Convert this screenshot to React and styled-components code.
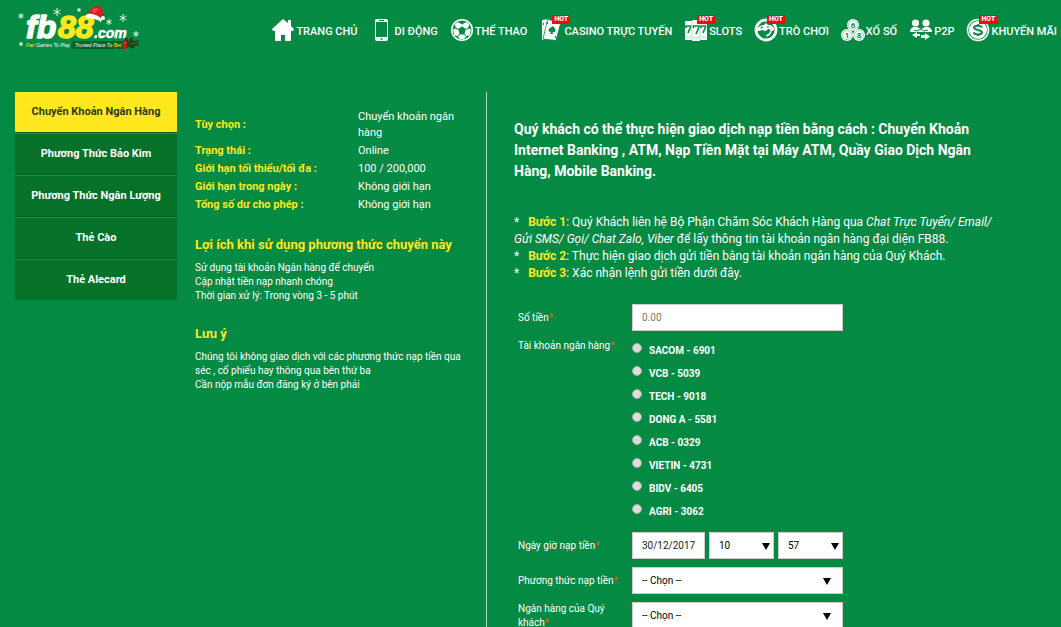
import React from "react"
import styled, { createGlobalStyle } from "styled-components"

const SnowFlake = ({ x, y, r }) => (
  <g stroke="#e6f5e9" strokeWidth="1" transform={`translate(${x} ${y})`}>
    <path d={`M0 ${-r}V${r}M${-r * 0.87} ${-r / 2}L${r * 0.87} ${r / 2}M${r * 0.87} ${-r / 2}L${-r * 0.87} ${r / 2}`} />
  </g>
)

const Logo = () => (
  <svg width="126" height="48" viewBox="0 0 126 48" role="img" aria-label="fb88.com">
    <rect x="55" y="35" width="56" height="8" rx="4" fill="#04602c" />
    <g fontFamily='"Liberation Sans", sans-serif' fontStyle="italic" fontWeight="700" strokeLinejoin="round">
      <text x="10" y="32" fontSize="32" fill="#fff" stroke="#fff" strokeWidth="1.5">fb</text>
      <text x="42" y="32" fontSize="32" fill="#ffe81d" stroke="#ffe81d" strokeWidth="1.5">88</text>
      <text x="78" y="32" fontSize="14" fill="#fff" stroke="#fff" strokeWidth=".5">.com</text>
    </g>
    <g fontFamily='"Liberation Sans", sans-serif' fontStyle="italic" fontSize="5">
      <text x="10" y="41" fill="#ffe81d">Fair<tspan fill="#fff"> Games To Play</tspan></text>
      <text x="59" y="41" fill="#fff">Trusted Place To <tspan fill="#ffe81d">Bet</tspan></text>
    </g>
    <path d="M71 9c2-5 6-9 12-9 3 1 4 4 4 8v5l-5-3z" fill="#d81e22" />
    <path d="M76 4c2-2 5-2 7-1-2 1-4 3-5 5z" fill="#f0484a" />
    <path d="M70 9c3-3 12 0 16 4l-1 3c-4-3-10-4-15-4z" fill="#fff" />
    <circle cx="87" cy="12" r="2" fill="#fff" />
    <SnowFlake x={5} y={10} r={3} />
    <SnowFlake x={41} y={6} r={4} />
    <SnowFlake x={63} y={4} r={2} />
    <SnowFlake x={93} y={16} r={3} />
    <SnowFlake x={107} y={12} r={4} />
    <SnowFlake x={120} y={28} r={3} />
    <SnowFlake x={5} y={38} r={2} />
    <path d="M108 36l1-5 4 3 3-3 1 4 7-1-3 3 3 2-5 1-2 3-4-2-4 2z" fill="#1d4317" />
    <path d="M113 38l8-1M112 36l1-3" stroke="#5f5a1c" strokeWidth="1" />
    <circle cx="109" cy="37" r="2.200" fill="#e3202a" />
    <circle cx="109" cy="41" r="2.200" fill="#c9141e" />
  </svg>
)

const HomeIcon = () => (
  <path fill="#fff" d="M12 1L1 11l1 2h2v10h6v-6h4v6h6V13h2l1-2-3-3V2h-3v3z" />
)

const PhoneIcon = () => (
  <>
    <rect x="5" y="1" width="13" height="22" rx="2" fill="#fff" />
    <rect x="6" y="4" width="11" height="15" fill="#048a43" />
    <path d="M9 2.500h5" stroke="#048a43" />
    <circle cx="11.500" cy="21" r="1" fill="#048a43" />
  </>
)

const BallIcon = () => (
  <>
    <circle cx="12" cy="12" r="10.300" fill="#048a43" stroke="#fff" strokeWidth="1.600" />
    <path fill="#fff" d="M12 6.500l4-2.500 3 2-.5 3.500L15.500 11 12 8.500 8.500 11 5.500 9.500 5 6l3-2zM3 11.500l2.500-1L8.500 12l1 3.500-2 2.500-3-.5zM21 11.500l-2.500-1-3 1.500-1 3.500 2 2.500 3-.5zM9.500 16.500h5l1.500 2.500-2 2h-4l-2-2z" />
    <path fill="#048a43" d="M12 8.500l3.500 2.700-1.300 4.300H9.800l-1.300-4.300z" />
  </>
)

const CardsIcon = () => (
  <>
    <path fill="#fff" d="M3 2l7-1-4 20-3 1z" />
    <path fill="#fff" stroke="#048a43" strokeWidth=".8" d="M8.500 1.500L22 4l-5 18.500L4 21z" />
    <path fill="#048a43" d="M13.500 8c2 2 3.500 3 3 5-.5 1.500-2 1.500-3 .8l.5 2.200h-3l1.200-2.500c-1.500.7-3 0-2.700-1.500.4-2 2.500-2 4-4zM8 4h1v2H8zM16 18h1v2h-1zM4 5h1v2H4z" />
  </>
)

const SevensIcon = () => (
  <>
    <path fill="#fff" d="M1 3h7v19H1zM16 3h7v19h-7zM8 2h8v21H8z" />
    <path fill="none" stroke="#048a43" strokeWidth="1.600" d="M2 10V8h4.500v1L4 15M9.500 10V8H15v1l-3 7M17 10V8h4.500v1L19 15" />
    <path stroke="#7cc49b" strokeWidth=".6" d="M8 4v18M16 4v18M2 19h5M9 20h6M17 19h5" />
  </>
)

const GameIcon = () => (
  <>
    <circle cx="12" cy="12" r="10" fill="none" stroke="#fff" strokeWidth="2.800" />
    <path fill="#fff" d="M3 11c2-3 4-4 7-4l2-2 2 2c4 0 6 2 6 5l-2 1-3-2c-2 0-2 2-4 2l-3-1-3 1H3z" />
    <path fill="#048a43" d="M6 9.500l3-1-1 2zM13 8.500h2v1h-2z" />
    <path fill="none" stroke="#fff" strokeWidth="1.600" d="M17 12c0 3-2 5-5 6" />
  </>
)

const LotteryIcon = () => (
  <>
    <circle cx="12" cy="7" r="6" fill="#fff" />
    <circle cx="6" cy="17" r="6" fill="#fff" />
    <circle cx="18" cy="17" r="6" fill="#fff" />
    <g fill="none" stroke="#5fb685" strokeWidth=".6">
      <circle cx="12" cy="7" r="4.500" />
      <circle cx="6" cy="17" r="4.500" />
      <circle cx="18" cy="17" r="4.500" />
    </g>
    <g fontFamily="Roboto, sans-serif" fontSize="8" fontWeight="700" fill="#048a43" textAnchor="middle">
      <text x="12" y="10">6</text>
      <text x="6" y="20">1</text>
      <text x="18" y="20">8</text>
    </g>
  </>
)

const PeopleIcon = () => (
  <>
    <circle cx="6.500" cy="5" r="3.600" fill="#fff" />
    <circle cx="17" cy="5" r="3.600" fill="#fff" />
    <path fill="#fff" d="M1 14c0-3 2-5 5-5h2l4 2 4-2h2c3 0 5 2 5 5z" />
    <path stroke="#048a43" strokeWidth="1" fill="none" d="M5 12l3 1 4-2 3 2 4-1" />
    <path fill="#fff" d="M8 14v2h3v2H8v2l-5-3zM16 15v2h-4v3h4v2l5-3.500z" />
  </>
)

const CoinIcon = () => (
  <>
    <circle cx="12" cy="12" r="10.500" fill="none" stroke="#fff" strokeWidth="1.500" />
    <circle cx="12" cy="12" r="9" fill="#fff" />
    <path d="M16 9.500c-1-2.500-7.500-2.500-8 0-.2 3 8 2 8 5-.5 2.500-7 2.500-8.500 0M12 6v2M12 16v2" fill="none" stroke="#048a43" strokeWidth="2" />
  </>
)

const navItems = [
  { label: "TRANG CHỦ", icon: HomeIcon },
  { label: "DI ĐỘNG", icon: PhoneIcon },
  { label: "THỂ THAO", icon: BallIcon },
  { label: "CASINO TRỰC TUYẾN", icon: CardsIcon, hot: true },
  { label: "SLOTS", icon: SevensIcon, hot: true },
  { label: "TRÒ CHƠI", icon: GameIcon, hot: true },
  { label: "XỔ SỐ", icon: LotteryIcon },
  { label: "P2P", icon: PeopleIcon },
  { label: "KHUYẾN MÃI", icon: CoinIcon, hot: true },
]

const methods = [
  "Chuyển Khoản Ngân Hàng",
  "Phương Thức Bảo Kim",
  "Phương Thức Ngân Lượng",
  "Thẻ Cào",
  "Thẻ Alecard",
]

const limits = [
  ["Tùy chọn :", "Chuyển khoản ngân hàng"],
  ["Trạng thái :", "Online"],
  ["Giới hạn tối thiểu/tối đa :", "100 / 200,000"],
  ["Giới hạn trong ngày :", "Không giới hạn"],
  ["Tổng số dư cho phép :", "Không giới hạn"],
]

const accounts = [
  "SACOM - 6901",
  "VCB - 5039",
  "TECH - 9018",
  "DONG A - 5581",
  "ACB - 0329",
  "VIETIN - 4731",
  "BIDV - 6405",
  "AGRI - 3062",
]

const App = () => {
  return (
    <>
      <GlobalStyles />
      <Header>
        <Logo />
        <Nav>
          {navItems.map(({ label, icon: Icon, hot }) => (
            <NavLink href="#" key={label}>
              <IconBox>
                <svg width="24" height="24" viewBox="0 0 24 24" aria-hidden="true"><Icon /></svg>
                {hot && <Hot>HOT</Hot>}
              </IconBox>
              {label}
            </NavLink>
          ))}
        </Nav>
      </Header>
      <Main>
        <SideMenu>
          {methods.map((method, index) => (
            <SideLink href="#" key={method} $active={index === 0}>{method}</SideLink>
          ))}
        </SideMenu>
        <Info>
          <Limits>
            <tbody>
              {limits.map(([name, value]) => (
                <tr key={name}>
                  <th scope="row">{name}</th>
                  <td>{value}</td>
                </tr>
              ))}
            </tbody>
          </Limits>
          <Note>
            <NoteTitle>Lợi ích khi sử dụng phương thức chuyển này</NoteTitle>
            <NoteText>Sử dụng tài khoản Ngân hàng để chuyển</NoteText>
            <NoteText>Cập nhật tiền nạp nhanh chóng</NoteText>
            <NoteText>Thời gian xử lý: Trong vòng 3 - 5 phút</NoteText>
          </Note>
          <Note>
            <NoteTitle>Lưu ý</NoteTitle>
            <NoteText>Chúng tôi không giao dịch với các phương thức nạp tiền qua séc , cổ phiếu hay thông qua bên thứ ba</NoteText>
            <NoteText>Cần nộp mẫu đơn đăng ký ở bên phải</NoteText>
          </Note>
        </Info>
        <Deposit>
          <Intro>
            Quý khách có thể thực hiện giao dịch nạp tiền bằng cách : Chuyển Khoản Internet Banking , ATM, Nạp Tiền Mặt tại Máy ATM, Quầy Giao Dịch Ngân Hàng, Mobile Banking.
          </Intro>
          <Step>
            <Star>*</Star><b>Bước 1</b>: Quý Khách liên hệ Bộ Phận Chăm Sóc Khách Hàng qua <i>Chat Trực Tuyến/ Email/ Gửi SMS/ Gọi/ Chat Zalo, Viber</i> để lấy thông tin tài khoản ngân hàng đại diện FB88.
          </Step>
          <Step>
            <Star>*</Star><b>Bước 2</b>: Thực hiện giao dịch gửi tiền bằng tài khoản ngân hàng của Quý Khách.
          </Step>
          <Step>
            <Star>*</Star><b>Bước 3</b>: Xác nhận lệnh gửi tiền dưới đây.
          </Step>
          <Form>
            <Label htmlFor="amount">Số tiền<em>*</em></Label>
            <TextInput id="amount" placeholder="0.00" />

            <Label as="span" id="account-label" $top>Tài khoản ngân hàng<em>*</em></Label>
            <Accounts role="radiogroup" aria-labelledby="account-label">
              {accounts.map((account) => (
                <Account key={account}>
                  <Radio type="radio" name="account" value={account} />
                  {account}
                </Account>
              ))}
            </Accounts>

            <Label htmlFor="date">Ngày giờ nạp tiền<em>*</em></Label>
            <DateRow>
              <TextInput id="date" defaultValue="30/12/2017" />
              <SelectBox>
                <Select aria-label="Giờ" defaultValue="10"><option>10</option></Select>
                <Arrow />
              </SelectBox>
              <SelectBox>
                <Select aria-label="Phút" defaultValue="57"><option>57</option></Select>
                <Arrow />
              </SelectBox>
            </DateRow>

            <Label htmlFor="method">Phương thức nạp tiền<em>*</em></Label>
            <SelectBox $wide>
              <Select id="method"><option>-- Chọn --</option></Select>
              <Arrow />
            </SelectBox>

            <Label htmlFor="bank">Ngân hàng của Quý khách<em>*</em></Label>
            <SelectBox $wide>
              <Select id="bank"><option>-- Chọn --</option></Select>
              <Arrow />
            </SelectBox>
          </Form>
        </Deposit>
      </Main>
    </>
  )
}

const Arrow = () => (
  <svg width="8" height="7" viewBox="0 0 8 7" aria-hidden="true"><path d="M0 0h8L4 7z" fill="#000" /></svg>
)

const GlobalStyles = createGlobalStyle`
  * {
    box-sizing: border-box;
  }

  body {
    margin: 0;
    background: #048a43;
    color: #fff;
    font-family: Roboto, sans-serif;
    font-size: 11px;
  }

  a {
    color: inherit;
    text-decoration: none;
  }
`

const Header = styled.header`
  display: flex;
  justify-content: space-between;
  height: 56px;
  padding: 6px 4px 0 16px;
  border-bottom: 2px solid #058641;
`

const Nav = styled.nav`
  display: flex;
  gap: 12px;
  align-self: flex-start;
  padding-top: 12px;
`

const NavLink = styled.a`
  display: flex;
  align-items: flex-start;
  gap: 1px;
  font-weight: 500;
  line-height: 28px;
  white-space: nowrap;
`

const IconBox = styled.span`
  position: relative;
  display: flex;
`

const Hot = styled.span`
  position: absolute;
  top: -3px;
  left: 13px;
  padding: 0 2px;
  background: #f00a0a;
  font-size: 7px;
  font-weight: 900;
  line-height: 9px;
`

const Main = styled.main`
  display: flex;
  align-items: stretch;
  padding: 36px 15px 0;
`

const SideMenu = styled.nav`
  flex: 0 0 162px;
  margin-right: 18px;
`

const SideLink = styled.a`
  display: block;
  border-top: ${(props) => (props.$active ? "none" : "1px solid #2b8a4c")};
  border-bottom: 1px solid #055c24;
  background: ${(props) => (props.$active ? "#ffe81d" : "#067129")};
  color: ${(props) => (props.$active ? "#2f3a10" : "#fff")};
  font-weight: 700;
  line-height: 40px;
  text-align: center;

  &:last-child {
    border-bottom: none;
  }
`

const Info = styled.section`
  flex: 0 0 292px;
  padding: 16px 24px 0 0;
  border-right: 1px solid #b4dcc4;
`

const Limits = styled.table`
  border-collapse: collapse;
  line-height: 16px;

  th,
  td {
    padding: 1px 0;
    text-align: left;
  }

  th {
    width: 163px;
    color: #ffe81d;
    font-weight: 700;
  }
`

const Note = styled.section`
  margin: 23px 0;
`

const NoteTitle = styled.h3`
  margin: 0 0 8px;
  color: #ffe81d;
  font-size: 13px;
  font-weight: 700;
  line-height: 16px;
`

const NoteText = styled.p`
  margin: 0;
  font-size: 10px;
  line-height: 14px;
`

const Deposit = styled.section`
  flex: 0 1 510px;
  padding: 27px 0 24px 27px;
`

const Intro = styled.p`
  margin: 0 0 32px;
  font-size: 14px;
  font-weight: 700;
  line-height: 21px;
`

const Step = styled.p`
  margin: 0;
  font-size: 12px;
  line-height: 17px;

  b {
    color: #ffe81d;
  }
`

const Star = styled.span`
  margin-right: 9px;
`

const Form = styled.form`
  display: grid;
  grid-template-columns: 114px 211px;
  row-gap: 8px;
  margin-top: 22px;
  padding-left: 4px;
`

const Label = styled.label`
  align-self: ${(props) => (props.$top ? "start" : "center")};
  padding-right: 8px;
  font-size: 10px;
  line-height: 14px;

  em {
    color: #f4502a;
    font-style: normal;
  }
`

const TextInput = styled.input`
  width: 100%;
  min-width: 0;
  height: 27px;
  padding: 0 9px;
  border: 1px solid #ccc;
  background: #fff;
  color: #222;
  font-family: inherit;
  font-size: 10px;

  &::placeholder {
    color: #777;
  }
`

const Accounts = styled.div`
  padding-bottom: 1px;
`

const Account = styled.label`
  display: flex;
  align-items: flex-start;
  gap: 7px;
  font-size: 10px;
  font-weight: 700;
  line-height: 23px;
`

const Radio = styled.input`
  appearance: none;
  width: 10px;
  height: 10px;
  margin: 4px 0 0;
  border: 1px solid #a9a9a9;
  border-radius: 50%;
  background: #ddd;
`

const DateRow = styled.div`
  display: grid;
  grid-template-columns: 73px 65px 65px;
  column-gap: 4px;
`

const SelectBox = styled.div`
  position: relative;
  display: flex;

  svg {
    position: absolute;
    top: 11px;
    right: ${(props) => (props.$wide ? "12px" : "4px")};
    pointer-events: none;
  }
`

const Select = styled.select`
  appearance: none;
  width: 100%;
  height: 27px;
  padding: 0 9px;
  border: 1px solid #ccc;
  border-radius: 0;
  background: #fff;
  color: #000;
  font-family: inherit;
  font-size: 10px;
`

export default App
